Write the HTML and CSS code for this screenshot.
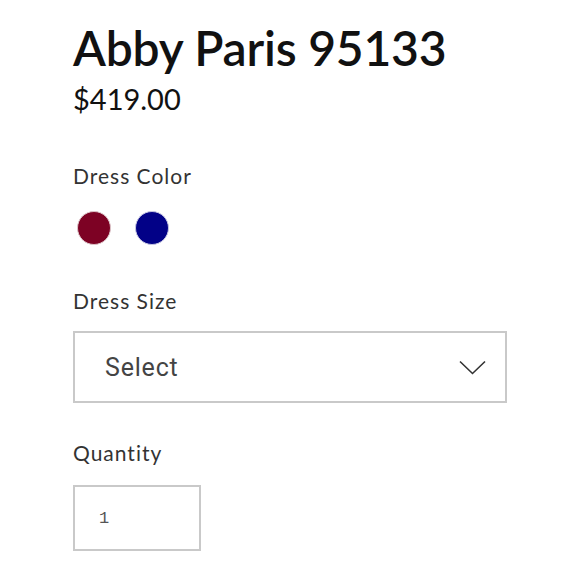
FILE: index.html
```html
<!DOCTYPE html>
<html>
<head>
<meta charset="utf-8">
<link rel="stylesheet" href="styles.css">
</head>
<body>
<main class="product">
  <h1 class="title">Abby Paris 95133</h1>
  <div class="price">$419.00</div>

  <section class="field field-color">
    <div class="label">Dress Color</div>
    <div class="swatches">
      <span class="swatch swatch-red"></span>
      <span class="swatch swatch-blue"></span>
    </div>
  </section>

  <section class="field field-size">
    <div class="label">Dress Size</div>
    <div class="select">
      <span class="select-text">Select</span>
      <svg class="chevron" width="27" height="15" viewBox="0 0 27 15"><path d="M1 1.5 L13.5 13.5 L26 1.5" fill="none" stroke="#333" stroke-width="1.6"/></svg>
    </div>
  </section>

  <section class="field field-qty">
    <div class="label">Quantity</div>
    <div class="qty">1</div>
  </section>
</main>
</body>
</html>
```

FILE: styles.css
```css
html, body {
  margin: 0;
  padding: 0;
  background: #fff;
}

.product {
  padding: 19px 0 0 73px;
  width: 434px;
  font-family: "Lato", "Noto Sans", sans-serif;
}

.title {
  margin: 0;
  font-size: 48px;
  font-weight: 600;
  line-height: 58px;
  color: #111;
  letter-spacing: -0.2px;
}

.price {
  margin-top: 4px;
  font-size: 29px;
  line-height: 36px;
  color: #111;
}

.field {
  display: flex;
  flex-direction: column;
}

.label {
  font-size: 21px;
  line-height: 28px;
  color: #333;
  letter-spacing: 1px;
}

.field-color {
  margin-top: 45px;
}

.swatches {
  display: flex;
  gap: 24px;
  margin-top: 21px;
  padding-left: 4px;
}

.swatch {
  width: 32px;
  height: 32px;
  border-radius: 50%;
  border: 1.5px solid #ddd;
  box-sizing: content-box;
}

.swatch-red { background: #7d0224; border-color: #dcc4c8; }
.swatch-blue { background: #020187; border-color: #c6c6e2; }

.field-size {
  margin-top: 42px;
}

.select {
  margin-top: 16px;
  height: 68px;
  border: 2px solid #c9c9c9;
  display: flex;
  align-items: center;
  justify-content: space-between;
  padding: 0 19px 0 30px;
}

.select-text {
  font-family: "Roboto", "Liberation Sans", sans-serif;
  font-size: 25px;
  color: #444;
  letter-spacing: 0.8px;
}

.chevron {
  display: block;
}

.field-qty {
  margin-top: 36px;
}

.qty {
  margin-top: 18px;
  border: 2px solid #c9c9c9;
  display: flex;
  align-items: center;
  padding-left: 24px;
  box-sizing: border-box;
  width: 128px;
  height: 66px;
  font-family: "Liberation Mono", monospace;
  font-size: 17px;
  color: #555;
}
```
